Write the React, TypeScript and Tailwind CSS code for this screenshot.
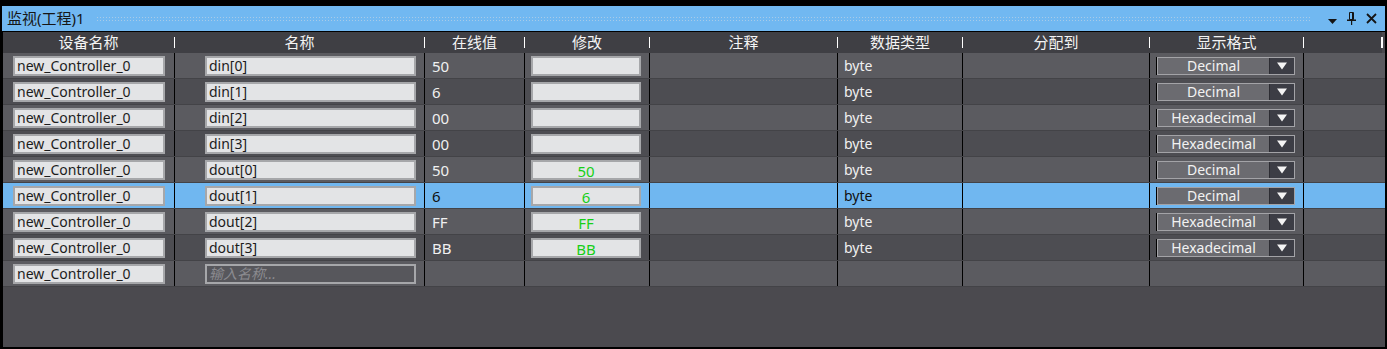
import React from "react";

type Row = { name: string; val: string; mod: string; fmt: string; sel?: boolean };

const rows: Row[] = [
  { name: "din[0]", val: "50", mod: "", fmt: "Decimal" },
  { name: "din[1]", val: "6", mod: "", fmt: "Decimal" },
  { name: "din[2]", val: "00", mod: "", fmt: "Hexadecimal" },
  { name: "din[3]", val: "00", mod: "", fmt: "Hexadecimal" },
  { name: "dout[0]", val: "50", mod: "50", fmt: "Decimal" },
  { name: "dout[1]", val: "6", mod: "6", fmt: "Decimal", sel: true },
  { name: "dout[2]", val: "FF", mod: "FF", fmt: "Hexadecimal" },
  { name: "dout[3]", val: "BB", mod: "BB", fmt: "Hexadecimal" },
];

const headers = ["设备名称", "名称", "在线值", "修改", "注释", "数据类型", "分配到", "显示格式", ""];

const GRID =
  "grid grid-cols-[172px_250px_100px_125px_188px_125px_187px_154px_79px]";

function Field({ children, w, className = "" }: { children?: React.ReactNode; w: string; className?: string }) {
  return (
    <div
      className={`${w} h-[20px] border-2 border-[#a6a7aa] bg-[#e3e4e6] text-[#1c1c1c] flex items-center leading-none ${className}`}
    >
      {children}
    </div>
  );
}

function Dropdown({ value }: { value: string }) {
  return (
    <div className="flex items-stretch h-[18px] ml-[6px]">
      <div className="w-px bg-black" />
      <div className="w-[138px] flex border border-[#a3a3a7] bg-[#6b6b70]">
        <div className="flex-1 flex items-center justify-center text-[#f2f2f2] leading-none">{value}</div>
        <div className="w-[25px] bg-[#3c3d45] border-l border-[#2c2c32] flex items-center justify-center">
          <svg width="10" height="8" viewBox="0 0 10 8">
            <path d="M0 0.5 H10 L5 7.5 Z" fill="#f4f4f4" />
          </svg>
        </div>
      </div>
    </div>
  );
}

export default function App() {
  return (
    <div className="w-[1387px] h-[349px] bg-black pt-[6px] pl-[2px] font-['Noto_Sans','Noto_Sans_CJK_SC',sans-serif] text-[14px] overflow-hidden">
      <div className="w-[1383px] h-[342px] flex flex-col">
        {/* Title bar */}
        <div className="h-[26px] bg-[#71b8f1] border-b border-black flex items-center pl-[5px] pr-[8px]">
          <span className="text-[15px] text-[#161616] leading-none">监视(工程)1</span>
          <div className="flex-1 h-[6px] ml-[11px] mr-[18px] bg-[radial-gradient(circle,#a8cbe8_0.7px,transparent_1px)] bg-[length:3px_3px]" />
          <div className="flex items-center gap-[10px] text-[#151515]">
            <svg width="9" height="6" viewBox="0 0 9 6" className="mt-[6px]">
              <path d="M0 0 H9 L4.5 5 Z" fill="#151515" />
            </svg>
            <svg width="9" height="13" viewBox="0 0 9 13">
              <path d="M2.5 0.5 H6.5 V7.5 H2.5 Z" fill="none" stroke="#151515" strokeWidth="1" />
              <rect x="5" y="1" width="1.5" height="6.5" fill="#151515" />
              <rect x="0" y="7.5" width="9" height="1.5" fill="#151515" />
              <rect x="4" y="9" width="1.2" height="4" fill="#151515" />
            </svg>
            <svg width="11" height="11" viewBox="0 0 11 11">
              <path d="M1 1 L10 10 M10 1 L1 10" stroke="#151515" strokeWidth="1.8" />
            </svg>
          </div>
        </div>

        {/* Body */}
        <div className="flex-1 bg-[#4b4a4f] border-l border-black border-b">
          {/* Header */}
          <div className={`${GRID} h-[21px] bg-[#3f3f44] w-[1379px]`}>
            {headers.map((h, i) => (
              <div key={i} className="flex items-center h-full">
                <div className="flex-1 text-center text-[15px] text-[#f4f4f4] leading-none">{h}</div>
                <div className={`${i === 8 ? "w-[2px]" : "w-px"} h-[11px] bg-white`} />
              </div>
            ))}
          </div>

          {/* Rows */}
          {[...rows, null].map((r, i) => {
            const bg = r?.sel ? "bg-[#70b7f0]" : i % 2 === 0 ? "bg-[#5b5b60]" : "bg-[#4d4d52]";
            const txt = r?.sel ? "text-[#111111]" : "text-[#f0f0f0]";
            return (
              <div key={i} className={`${GRID} h-[26px] border-b border-[#434347] ${bg}`}>
                <div className="border-r border-black flex items-center pl-[10px]">
                  <Field w="w-[152px]" className="pl-[2px]">new_Controller_0</Field>
                </div>
                <div className="border-r border-black flex items-center pl-[30px]">
                  {r ? (
                    <Field w="w-[211px]" className="pl-[2px]">{r.name}</Field>
                  ) : (
                    <div className="w-[211px] h-[20px] border-2 border-[#a6a7aa] bg-[#57575c] flex items-center pl-[2px] italic text-[#8b8b90] leading-none">
                      输入名称...
                    </div>
                  )}
                </div>
                <div className={`border-r border-black flex items-center pl-[7px] pt-[2px] text-[15px] ${txt}`}>{r?.val}</div>
                <div className="border-r border-black flex items-center pl-[6px]">
                  {r && (
                    <Field w="w-[110px]" className="justify-center text-[#17cf17] pt-[3px] text-[15px]">
                      {r.mod}
                    </Field>
                  )}
                </div>
                <div className="border-r border-black" />
                <div className={`border-r border-black flex items-center pl-[6px] ${txt}`}>{r ? "byte" : ""}</div>
                <div className="border-r border-black" />
                <div className="border-r border-black flex items-center">{r && <Dropdown value={r.fmt} />}</div>
                <div />
              </div>
            );
          })}
        </div>
      </div>
    </div>
  );
}
